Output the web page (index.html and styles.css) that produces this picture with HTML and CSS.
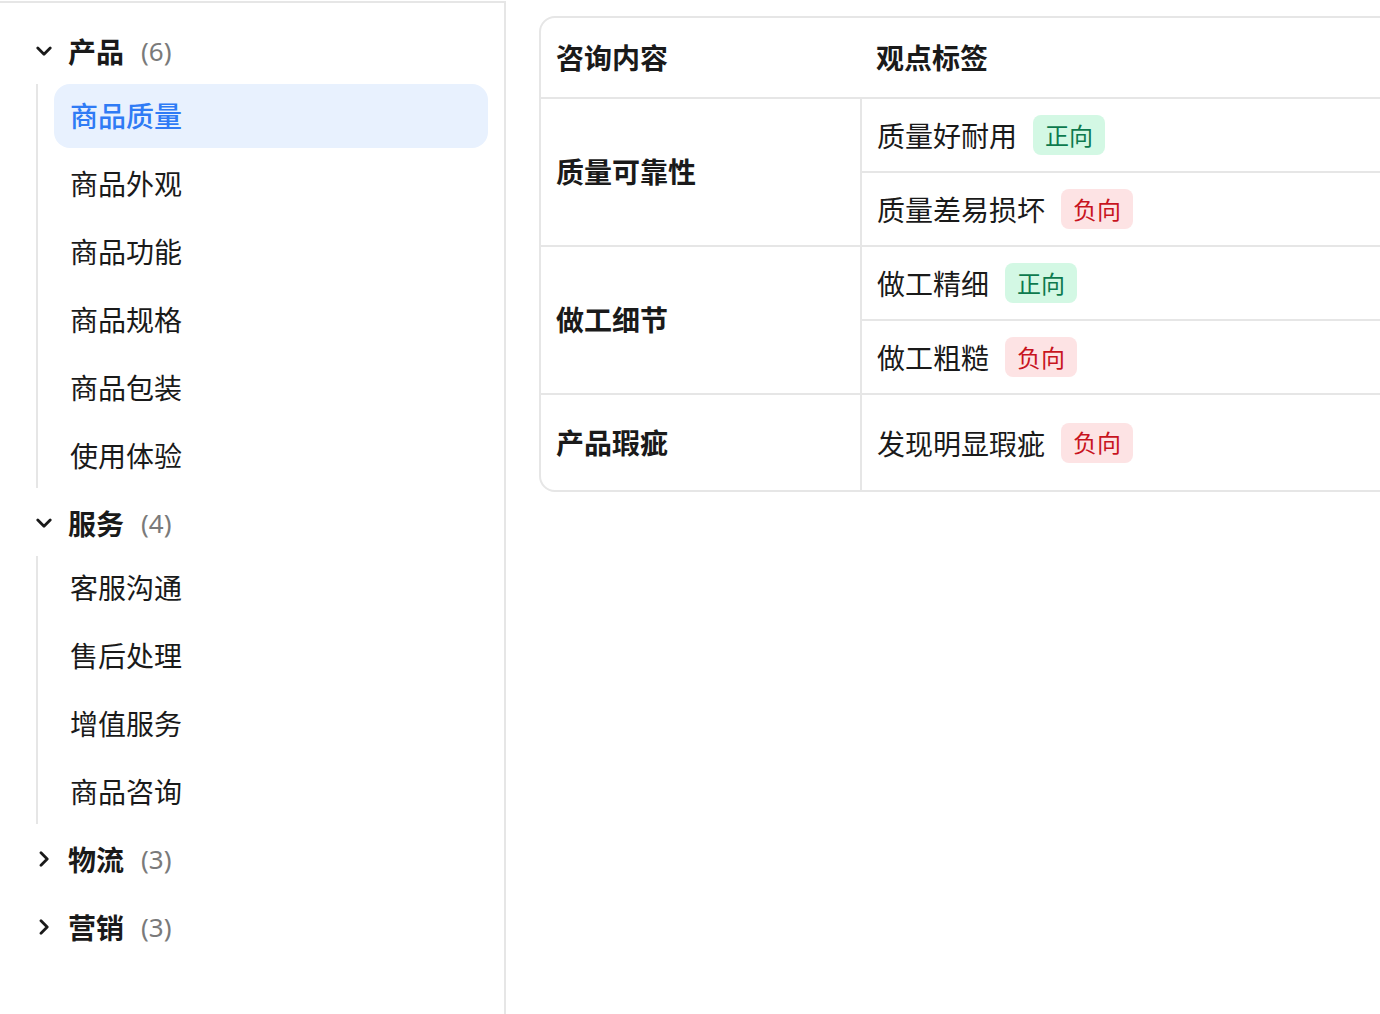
FILE: index.html
```html
<!DOCTYPE html>
<html lang="zh-CN">
<head>
<meta charset="utf-8">
<title>观点标签</title>
<link rel="stylesheet" href="styles.css">
</head>
<body>
<div class="page">
  <aside class="sidebar">
    <div class="group">
      <div class="group-header">
        <svg class="chev" viewBox="0 0 16 16" width="16" height="16"><path d="M1.8 5 L8 11.2 L14.2 5" fill="none" stroke="#1a1a1a" stroke-width="2.8" stroke-linecap="round" stroke-linejoin="round"/></svg>
        <span class="group-name">产品</span><span class="count">(6)</span>
      </div>
      <ul class="items">
        <li class="item active">商品质量</li>
        <li class="item">商品外观</li>
        <li class="item">商品功能</li>
        <li class="item">商品规格</li>
        <li class="item">商品包装</li>
        <li class="item">使用体验</li>
      </ul>
    </div>
    <div class="group">
      <div class="group-header">
        <svg class="chev" viewBox="0 0 16 16" width="16" height="16"><path d="M1.8 5 L8 11.2 L14.2 5" fill="none" stroke="#1a1a1a" stroke-width="2.8" stroke-linecap="round" stroke-linejoin="round"/></svg>
        <span class="group-name">服务</span><span class="count">(4)</span>
      </div>
      <ul class="items">
        <li class="item">客服沟通</li>
        <li class="item">售后处理</li>
        <li class="item">增值服务</li>
        <li class="item">商品咨询</li>
      </ul>
    </div>
    <div class="group">
      <div class="group-header">
        <svg class="chev" viewBox="0 0 16 16" width="16" height="16"><path d="M5 1.8 L11.2 8 L5 14.2" fill="none" stroke="#1a1a1a" stroke-width="2.8" stroke-linecap="round" stroke-linejoin="round"/></svg>
        <span class="group-name">物流</span><span class="count">(3)</span>
      </div>
    </div>
    <div class="group">
      <div class="group-header">
        <svg class="chev" viewBox="0 0 16 16" width="16" height="16"><path d="M5 1.8 L11.2 8 L5 14.2" fill="none" stroke="#1a1a1a" stroke-width="2.8" stroke-linecap="round" stroke-linejoin="round"/></svg>
        <span class="group-name">营销</span><span class="count">(3)</span>
      </div>
    </div>
  </aside>
  <main class="content">
    <div class="table">
      <div class="thead">
        <div class="th th-1">咨询内容</div>
        <div class="th th-2">观点标签</div>
      </div>
      <div class="tgroup">
        <div class="topic">质量可靠性</div>
        <div class="views">
          <div class="view"><span>质量好耐用</span><span class="tag pos">正向</span></div>
          <div class="view"><span>质量差易损坏</span><span class="tag neg">负向</span></div>
        </div>
      </div>
      <div class="tgroup">
        <div class="topic">做工细节</div>
        <div class="views">
          <div class="view"><span>做工精细</span><span class="tag pos">正向</span></div>
          <div class="view"><span>做工粗糙</span><span class="tag neg">负向</span></div>
        </div>
      </div>
      <div class="tgroup last">
        <div class="topic">产品瑕疵</div>
        <div class="views">
          <div class="view single"><span>发现明显瑕疵</span><span class="tag neg">负向</span></div>
        </div>
      </div>
    </div>
  </main>
</div>
</body>
</html>
```

FILE: styles.css
```css
* { box-sizing: border-box; }
html, body {
  margin: 0;
  padding: 0;
  background: #ffffff;
  overflow: hidden;
}
body {
  font-family: "Noto Sans CJK SC", "Noto Sans", sans-serif;
  color: #1a1a1a;
  width: 1380px;
  height: 1014px;
}
.page {
  display: flex;
  height: 1014px;
}
.sidebar {
  width: 506px;
  flex: none;
  margin-top: 1px;
  border-top: 2px solid #e6e6e6;
  border-right: 2px solid #e6e6e6;
  padding: 17px 16px 0 0;
}
.group + .group { margin-top: 4px; }
.group-header {
  height: 64px;
  display: flex;
  align-items: center;
  padding-left: 36px;
  padding-bottom: 2px;
}
.chev { flex: none; margin-right: 16px; }
.group-name {
  font-size: 28px;
  font-weight: 600;
  line-height: 1;
}
.count {
  font-family: "Noto Sans", sans-serif;
  font-size: 26px;
  color: #7a7a7a;
  margin-left: 17px;
  line-height: 1;
}
.items {
  list-style: none;
  margin: 0 0 0 36px;
  padding: 0;
  border-left: 2px solid #e6e6e6;
  display: flex;
  flex-direction: column;
  gap: 4px;
}
.item {
  height: 64px;
  margin-left: 16px;
  padding-left: 16px;
  padding-bottom: 2px;
  display: flex;
  align-items: center;
  font-size: 28px;
  border-radius: 16px;
}
.item.active {
  background: #e8f1fe;
  color: #2f7bf5;
  font-weight: 500;
}
.content {
  flex: 1;
  padding: 16px 0 0 33px;
  min-width: 0;
}
.table {
  width: 960px;
  border: 2px solid #e6e6e6;
  border-radius: 16px;
}
.thead {
  display: flex;
  height: 81px;
  border-bottom: 2px solid #e6e6e6;
}
.th {
  display: flex;
  align-items: center;
  font-size: 28px;
  font-weight: 600;
  padding-bottom: 2px;
}
.th-1 { width: 321px; padding-left: 15px; }
.th-2 { padding-left: 14px; }
.tgroup {
  display: flex;
  border-bottom: 2px solid #e6e6e6;
}
.tgroup.last { border-bottom: none; }
.topic {
  width: 321px;
  flex: none;
  border-right: 2px solid #e6e6e6;
  padding-left: 15px;
  padding-bottom: 2px;
  display: flex;
  align-items: center;
  font-size: 28px;
  font-weight: 600;
}
.views {
  flex: 1;
  display: flex;
  flex-direction: column;
}
.view {
  height: 74px;
  display: flex;
  align-items: center;
  gap: 16px;
  padding-left: 15px;
  font-size: 28px;
}
.view + .view { border-top: 2px solid #e6e6e6; }
.views .view:first-child { height: 72px; }
.views .view.single { height: 95px; }
.tag {
  height: 40px;
  padding: 0 12px 2px;
  border-radius: 8px;
  display: inline-flex;
  align-items: center;
  font-size: 24px;
  font-weight: 400;
}
.tag.pos { background: #d3f8e4; color: #0d7a4e; }
.tag.neg { background: #fde3e4; color: #c8141e; }
```
